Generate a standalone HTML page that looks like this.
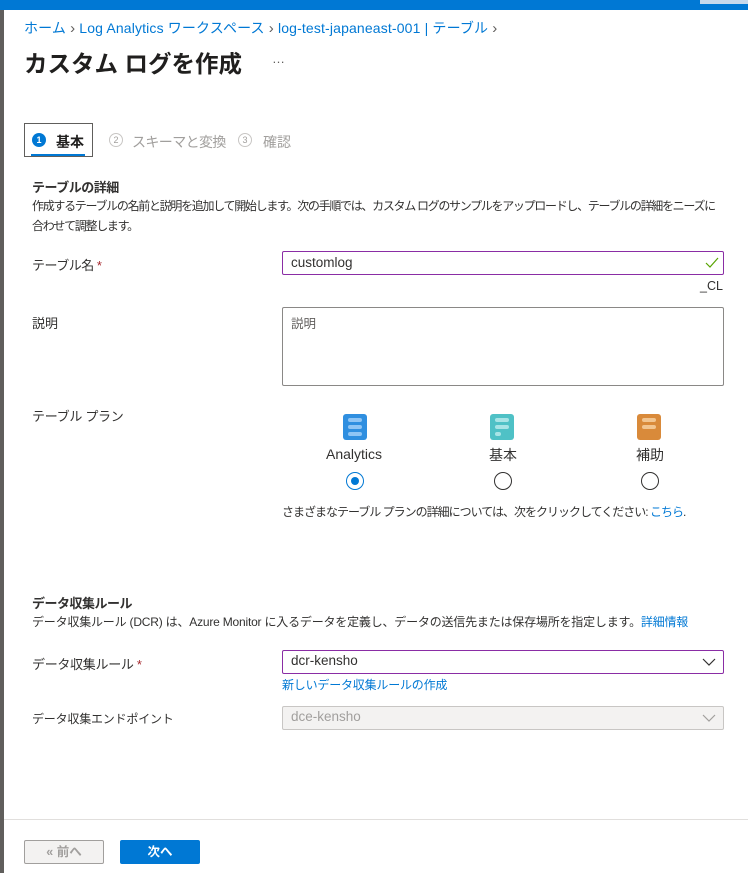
<!DOCTYPE html>
<html><head><meta charset="utf-8"><style>
*{box-sizing:border-box;margin:0;padding:0}
body{width:748px;height:873px;overflow:hidden;background:#fff;font-family:"Liberation Sans","Noto Sans CJK JP",sans-serif;color:#323130;font-size:13px;position:relative}
.a{position:absolute;white-space:nowrap}
.lnk{color:#0078d4}
.box{position:absolute;border:1px solid #8a8886;border-radius:2px;background:#fff}
.sep{color:#605e5c;font-size:15px}
</style></head><body>
<div class="a" style="left:0;top:0;width:748px;height:10px;background:#0078d4"></div>
<div class="a" style="left:700px;top:0;width:48px;height:4px;background:#c7d9ec"></div>
<div class="a" style="left:0;top:10px;width:4px;height:863px;background:#605e5c"></div>

<div class="a lnk" style="left:24px;top:18px;font-size:14px;letter-spacing:0.15px">ホーム <span class="sep">›</span> Log Analytics ワークスペース <span class="sep">›</span> log-test-japaneast-001 | テーブル <span class="sep">›</span></div>
<div class="a" style="left:24px;top:45px;font-size:23.5px;font-weight:bold;color:#201f1e">カスタム ログを作成</div>
<div class="a" style="left:272px;top:51px;font-size:13px;color:#605e5c">…</div>

<div class="a" style="left:24px;top:123px;width:69px;height:34px;border:1px solid #605e5c"></div>
<div class="a" style="left:32px;top:133px;width:14px;height:14px;border-radius:50%;background:#0078d4;color:#fff;font-size:9px;text-align:center;line-height:14px;font-weight:bold">1</div>
<div class="a" style="left:56px;top:132px;font-size:14px;font-weight:bold;color:#201f1e">基本</div>
<div class="a" style="left:31px;top:154px;width:54px;height:2px;background:#0078d4"></div>
<div class="a" style="left:109px;top:133px;width:14px;height:14px;border-radius:50%;border:1px solid #c8c6c4;color:#a19f9d;font-size:9px;text-align:center;line-height:12px">2</div>
<div class="a" style="left:132px;top:132px;font-size:14px;color:#a19f9d;letter-spacing:-0.6px">スキーマと変換</div>
<div class="a" style="left:238px;top:133px;width:14px;height:14px;border-radius:50%;border:1px solid #c8c6c4;color:#a19f9d;font-size:9px;text-align:center;line-height:12px">3</div>
<div class="a" style="left:263px;top:132px;font-size:14px;color:#a19f9d">確認</div>

<div class="a" style="left:32px;top:177px;font-weight:bold;font-size:13px;letter-spacing:-0.5px">テーブルの詳細</div>
<div class="a" style="left:32px;top:196px;font-size:12px;line-height:20px;letter-spacing:-1.3px">作成するテーブルの名前と説明を追加して開始します。次の手順では、カスタム ログのサンプルをアップロードし、テーブルの詳細をニーズに<br>合わせて調整します。</div>

<div class="a" style="left:32px;top:255px;letter-spacing:-0.5px">テーブル名 <span style="color:#a4262c">*</span></div>
<div class="box" style="left:282px;top:251px;width:442px;height:24px;border-color:#8a2da5"></div>
<div class="a" style="left:291px;top:255px;font-size:13.5px">customlog</div>
<svg class="a" style="left:705px;top:257px" width="14" height="12"><path d="M1 6 L5 10 L13 1" fill="none" stroke="#57a300" stroke-width="1.2"/></svg>
<div class="a" style="left:700px;top:279px;font-size:12.5px">_CL</div>

<div class="a" style="left:32px;top:313px">説明</div>
<div class="box" style="left:282px;top:307px;width:442px;height:79px"></div>
<div class="a" style="left:291px;top:313px;color:#605e5c;font-size:12.5px">説明</div>

<div class="a" style="left:32px;top:406px;letter-spacing:-0.3px">テーブル プラン</div>
<svg class="a" style="left:343px;top:414px" width="24" height="26"><rect width="24" height="26" rx="3" fill="#2f8fe0"/><rect x="5" y="4" width="14" height="4" rx="2" fill="#8fc5f5"/><rect x="5" y="11" width="14" height="4" rx="2" fill="#8fc5f5"/><rect x="5" y="18" width="14" height="4" rx="2" fill="#8fc5f5"/></svg>
<svg class="a" style="left:490px;top:414px" width="24" height="26"><rect width="24" height="26" rx="3" fill="#4fc1c6"/><rect x="5" y="4" width="14" height="4" rx="2" fill="#a8e4e6"/><rect x="5" y="11" width="14" height="4" rx="2" fill="#a8e4e6"/><rect x="5" y="18" width="6" height="4" rx="2" fill="#a8e4e6"/></svg>
<svg class="a" style="left:637px;top:414px" width="24" height="26"><rect width="24" height="26" rx="3" fill="#d98a3a"/><rect x="5" y="4" width="14" height="4" rx="2" fill="#f2c590"/><rect x="5" y="11" width="14" height="4" rx="2" fill="#f2c590"/></svg>
<div class="a" style="left:326px;top:446px;font-size:14px">Analytics</div>
<div class="a" style="left:489px;top:445px;font-size:14px">基本</div>
<div class="a" style="left:636px;top:445px;font-size:14px">補助</div>
<div class="a" style="left:346px;top:472px;width:18px;height:18px;border-radius:50%;border:1px solid #0078d4"></div>
<div class="a" style="left:351px;top:477px;width:8px;height:8px;border-radius:50%;background:#0078d4"></div>
<div class="a" style="left:494px;top:472px;width:18px;height:18px;border-radius:50%;border:1px solid #323130"></div>
<div class="a" style="left:641px;top:472px;width:18px;height:18px;border-radius:50%;border:1px solid #323130"></div>
<div class="a" style="left:282px;top:503px;font-size:12px;letter-spacing:-1px">さまざまなテーブル プランの詳細については、次をクリックしてください: <span class="lnk">こちら</span>.</div>

<div class="a" style="left:32px;top:593px;font-weight:bold;letter-spacing:-0.5px">データ収集ルール</div>
<div class="a" style="left:32px;top:613px;font-size:12px;letter-spacing:-0.2px">データ収集ルール (DCR) は、Azure Monitor に入るデータを定義し、データの送信先または保存場所を指定します。<span class="lnk">詳細情報</span></div>

<div class="a" style="left:32px;top:654px;letter-spacing:-0.3px">データ収集ルール <span style="color:#a4262c">*</span></div>
<div class="box" style="left:282px;top:650px;width:442px;height:24px;border-color:#8a2da5"></div>
<div class="a" style="left:291px;top:653px;font-size:13.5px">dcr-kensho</div>
<svg class="a" style="left:702px;top:657px" width="14" height="10"><path d="M1 2 L7 8 L13 2" fill="none" stroke="#323130" stroke-width="1.2"/></svg>
<div class="a lnk" style="left:282px;top:676px;font-size:12px;letter-spacing:-0.2px">新しいデータ収集ルールの作成</div>

<div class="a" style="left:32px;top:710px;font-size:12px;letter-spacing:-0.2px">データ収集エンドポイント</div>
<div class="box" style="left:282px;top:706px;width:442px;height:24px;background:#f3f2f1;border-color:#c8c6c4"></div>
<div class="a" style="left:291px;top:709px;color:#a19f9d;font-size:13.5px">dce-kensho</div>
<svg class="a" style="left:702px;top:713px" width="14" height="10"><path d="M1 2 L7 8 L13 2" fill="none" stroke="#a19f9d" stroke-width="1.2"/></svg>

<div class="a" style="left:4px;top:819px;width:744px;height:1px;background:#e1dfdd"></div>
<div class="a" style="left:24px;top:840px;width:80px;height:24px;border:1px solid #a19f9d;background:#f3f2f1;border-radius:2px;text-align:center;line-height:22px;color:#a19f9d;font-weight:bold;font-size:12.5px">« 前へ</div>
<div class="a" style="left:120px;top:840px;width:80px;height:24px;background:#0078d4;border-radius:2px;text-align:center;line-height:24px;color:#fff;font-weight:bold;font-size:12.5px">次へ</div>
</body></html>
